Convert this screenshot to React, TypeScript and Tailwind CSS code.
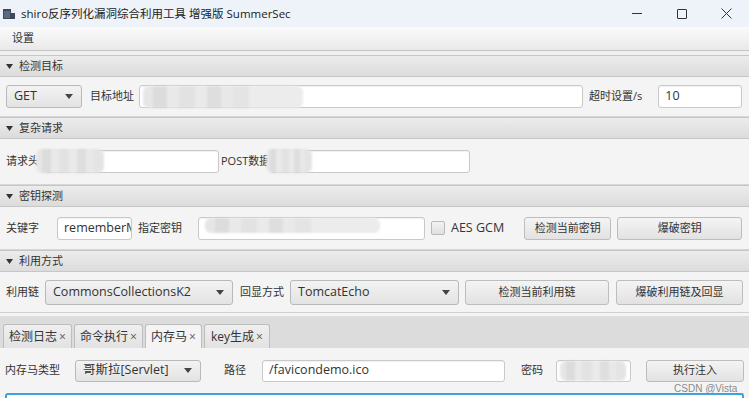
import React from "react"

const font = { fontFamily: '"Open Sans", "Noto Sans CJK SC", sans-serif' }

function Blur({ className }: { className: string }) {
    // mosaic patch that hides private values
    return (
        <div className={`absolute flex overflow-hidden rounded-[6px] blur-[1px] ${className}`}>
            <div className="w-[10px] h-full bg-[#e6e6e6]" />
            <div className="w-[14px] h-full bg-[#dcdcdc]" />
            <div className="w-[12px] h-full bg-[#e9e9e9]" />
            <div className="w-[16px] h-full bg-[#e2e2e2]" />
            <div className="w-[12px] h-full bg-[#eaeaea]" />
            <div className="w-[14px] h-full bg-[#dedede]" />
            <div className="w-[12px] h-full bg-[#e8e8e8]" />
            <div className="w-[16px] h-full bg-[#e4e4e4]" />
            <div className="flex-1 h-full bg-[#ececec]" />
        </div>
    )
}

function Label({ children, className = "" }: { children: React.ReactNode; className?: string }) {
    return <span className={`shrink-0 text-[11px] text-[#333] whitespace-nowrap ${className}`}>{children}</span>
}

function Combo({ text, className }: { text: string; className: string }) {
    return (
        <div className={`flex shrink-0 items-center justify-between rounded-[3px] border border-[#b9b9b9] bg-gradient-to-b from-[#f3f3f3] to-[#e3e3e3] pl-[7px] pr-[8px] text-[12.5px] text-[#333] ${className}`}>
            <span className="whitespace-nowrap">{text}</span>
            <svg width="8" height="5" viewBox="0 0 8 5"><path d="M0 0h8L4 5z" fill="#444" /></svg>
        </div>
    )
}

function Btn({ text, className }: { text: string; className: string }) {
    return (
        <div className={`flex shrink-0 items-center justify-center rounded-[3px] border border-[#bdbdbd] bg-gradient-to-b from-[#f4f4f4] to-[#e2e2e2] text-[11px] text-[#333] ${className}`}>
            {text}
        </div>
    )
}

function Field({ text = "", className }: { text?: string; className: string }) {
    return (
        <div className={`flex shrink-0 items-center overflow-hidden rounded-[3px] border border-[#c9c9c9] bg-white pl-[6px] text-[12.5px] text-[#333] shadow-[inset_0_1px_1px_rgba(0,0,0,0.06)] ${className}`}>
            <span className="min-w-0 overflow-hidden text-clip whitespace-nowrap">{text}</span>
        </div>
    )
}

function Header({ title }: { title: string }) {
    return (
        <div className="flex h-[22px] items-center gap-[6px] border-y border-[#c6c6c6] bg-gradient-to-b from-[#ececec] to-[#dcdcdc] px-[6px]">
            <svg width="7" height="5" viewBox="0 0 7 5"><path d="M0 0h7L3.5 5z" fill="#333" /></svg>
            <span className="text-[11px] text-[#333]">{title}</span>
        </div>
    )
}

export default function App() {
    return (
        <div className="relative h-[398px] w-[749px] overflow-hidden bg-[#f4f4f4]" style={font}>
            {/* Title bar */}
            <div className="flex h-[27px] items-center bg-[#eef3f9]">
                <svg className="ml-[3px]" width="12" height="10" viewBox="0 0 12 10">
                    <rect x="0" y="0" width="12" height="10" fill="#3d4a5c" />
                    <rect x="8" y="0" width="4" height="4" fill="#e8eef5" />
                    <rect x="1" y="2" width="6" height="7" fill="#5a6b80" />
                </svg>
                <span className="ml-[6px] text-[11.5px] text-[#222]">shiro反序列化漏洞综合利用工具 增强版 SummerSec</span>
                <div className="ml-auto flex h-full items-center">
                    <div className="flex h-full w-[45px] items-center justify-center">
                        <div className="h-px w-[10px] bg-[#333]" />
                    </div>
                    <div className="flex h-full w-[45px] items-center justify-center">
                        <div className="h-[10px] w-[10px] rounded-[1px] border border-[#333]" />
                    </div>
                    <div className="flex h-full w-[45px] items-center justify-center">
                        <svg width="11" height="11" viewBox="0 0 11 11"><path d="M0.5 0.5l10 10M10.5 0.5l-10 10" stroke="#333" strokeWidth="1" /></svg>
                    </div>
                </div>
            </div>

            {/* Menu bar */}
            <div className="flex h-[24px] items-center border-b border-[#c4c4c4] bg-gradient-to-b from-[#fbfbfb] to-[#e9e9e9] px-[12px]">
                <span className="text-[11px] text-[#333]">设置</span>
            </div>
            <div className="h-[4px] bg-[#f0f0f0]" />

            {/* 检测目标 */}
            <Header title="检测目标" />
            <div className="relative flex h-[40px] items-center border-b border-[#d6d6d6] px-[6px]">
                <Combo text="GET" className="h-[23px] w-[76px]" />
                <Label className="ml-[8px]">目标地址</Label>
                <Field className="ml-[5px] h-[23px] w-[444px]" />
                <Label className="ml-[6px]">超时设置/s</Label>
                <Field text="10" className="ml-[16px] h-[23px] w-[84px]" />
                <Blur className="left-[143px] top-[9px] h-[22px] w-[160px]" />
            </div>

            {/* 复杂请求 */}
            <Header title="复杂请求" />
            <div className="relative flex h-[46px] items-center border-b border-[#d6d6d6] px-[6px]">
                <Label>请求头</Label>
                <Field className="ml-[6px] h-[23px] w-[174px]" />
                <Label className="ml-[2px]">POST数据</Label>
                <Field className="ml-[1px] h-[23px] w-[199px]" />
                <Blur className="left-[36px] top-[10px] h-[24px] w-[68px]" />
                <Blur className="left-[266px] top-[10px] h-[24px] w-[46px]" />
            </div>

            {/* 密钥探测 */}
            <Header title="密钥探测" />
            <div className="relative flex h-[43px] items-center border-b border-[#d6d6d6] px-[6px]">
                <Label>关键字</Label>
                <Field text="rememberMe" className="ml-[18px] h-[23px] w-[75px]" />
                <Label className="ml-[6px]">指定密钥</Label>
                <Field className="ml-[16px] h-[23px] w-[227px]" />
                <div className="ml-[6px] h-[14px] w-[14px] shrink-0 rounded-[2px] border border-[#b9b9b9] bg-gradient-to-b from-[#f2f2f2] to-[#e0e0e0]" />
                <span className="ml-[6px] shrink-0 whitespace-nowrap text-[12.5px] text-[#333]">AES GCM</span>
                <Btn text="检测当前密钥" className="ml-[20px] h-[23px] w-[87px]" />
                <Btn text="爆破密钥" className="ml-[6px] h-[23px] w-[125px]" />
                <Blur className="left-[205px] top-[11px] h-[15px] w-[175px]" />
            </div>

            {/* 利用方式 */}
            <Header title="利用方式" />
            <div className="flex h-[41px] items-center border-b border-[#d0d0d0] px-[6px]">
                <Label>利用链</Label>
                <Combo text="CommonsCollectionsK2" className="ml-[6px] h-[25px] w-[188px]" />
                <Label className="ml-[7px]">回显方式</Label>
                <Combo text="TomcatEcho" className="ml-[6px] h-[25px] w-[169px]" />
                <Btn text="检测当前利用链" className="ml-[6px] h-[25px] w-[144px]" />
                <Btn text="爆破利用链及回显" className="ml-[7px] h-[25px] w-[127px]" />
            </div>
            <div className="h-[3px] bg-[#f4f4f4]" />

            {/* Tabs */}
            <div className="flex h-[32px] items-end gap-[2px] bg-[#dcdcdc] pl-[3px]">
                {[
                    { t: "检测日志", a: false, w: "w-[69px]" },
                    { t: "命令执行", a: false, w: "w-[69px]" },
                    { t: "内存马", a: true, w: "w-[57px]" },
                    { t: "key生成", a: false, w: "w-[66px]" },
                ].map((tab) => (
                    <div
                        key={tab.t}
                        className={`flex h-[24px] items-center justify-center gap-[2px] rounded-t-[3px] border border-b-0 border-[#bdbdbd] text-[12px] text-[#333] ${tab.w} ${tab.a ? "bg-[#f4f4f4]" : "bg-gradient-to-b from-[#efefef] to-[#e2e2e2]"}`}
                    >
                        <span>{tab.t}</span>
                        <span className="text-[12px] text-[#555]">×</span>
                    </div>
                ))}
            </div>
            <div className="relative px-[5px]">
                <div className="flex h-[45px] items-center">
                    <Label>内存马类型</Label>
                    <Combo text="哥斯拉[Servlet]" className="ml-[15px] h-[22px] w-[126px]" />
                    <Label className="ml-[23px]">路径</Label>
                    <Field text="/favicondemo.ico" className="ml-[16px] h-[22px] w-[243px]" />
                    <Label className="ml-[16px]">密码</Label>
                    <Field className="ml-[13px] h-[22px] w-[75px]" />
                    <Btn text="执行注入" className="ml-[15px] h-[22px] w-[98px]" />
                </div>
                <div className="h-[20px] rounded-[3px] border-2 border-[#3ea3dc] bg-white" />
                <Blur className="left-[560px] top-[13px] h-[20px] w-[66px]" />
            </div>

            <span className="absolute bottom-[2px] right-[6px] text-[10px] text-[#8a8a8a]" style={{ fontFamily: '"Liberation Sans", sans-serif' }}>
                CSDN @Vista_
            </span>
        </div>
    )
}
